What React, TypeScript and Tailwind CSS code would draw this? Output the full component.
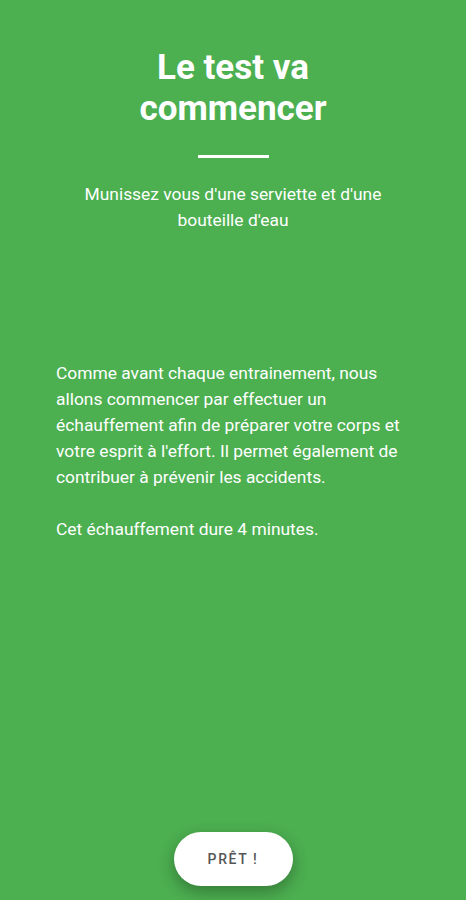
export default function App() {
  return (
    <div
      className="relative flex h-[900px] w-full flex-col items-center bg-[#4caf50] text-white"
      style={{ fontFamily: "Roboto, 'Liberation Sans', sans-serif" }}
    >
      <h1 className="mt-[47px] text-center text-[35px] font-bold leading-[41px]">
        Le test va
        <br />
        commencer
      </h1>
      <div className="mt-[26px] h-[3px] w-[71px] bg-white" />
      <p className="mt-[23px] w-[330px] text-center text-[17.4px] leading-[26px]">
        Munissez vous d'une serviette et d'une bouteille d'eau
      </p>
      <div className="mt-[127px] w-[354px] text-[17.4px] leading-[26px]">
        <p>
          Comme avant chaque entrainement, nous allons commencer par effectuer un échauffement afin de préparer
          votre corps et votre esprit à l'effort. Il permet également de contribuer à prévenir les accidents.
        </p>
        <p className="mt-[26px]">Cet échauffement dure 4 minutes.</p>
      </div>
      <div className="flex-1" />
      <button className="mb-[14px] h-[54px] w-[119px] rounded-full bg-white text-[14px] font-medium tracking-[1.6px] text-[#555] shadow-[0_6px_16px_rgba(0,0,0,0.3)]">
        PRÊT !
      </button>
    </div>
  );
}
